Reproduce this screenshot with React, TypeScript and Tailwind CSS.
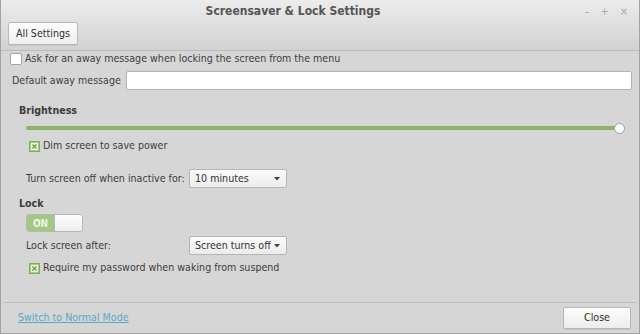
import React from 'react';

const Check = ({ checked }: { checked?: boolean }) =>
  checked ? (
    <span className="w-[11px] h-[11px] border border-[#7fae5a] bg-[#a5cc82] flex items-center justify-center shrink-0">
      <svg width="7" height="7" viewBox="0 0 7 7">
        <rect x="0" y="0" width="7" height="7" fill="#e9f3df" />
        <path d="M1.5 1.5 L5.5 5.5 M5.5 1.5 L1.5 5.5" stroke="#6c9e47" strokeWidth="1.3" />
      </svg>
    </span>
  ) : (
    <span className="w-[12px] h-[12px] border border-[#a3a3a3] bg-white rounded-[2px] shrink-0" />
  );

const Combo = ({ label }: { label: string }) => (
  <div className="w-[98px] h-[19px] bg-gradient-to-b from-[#fbfbfb] to-[#ececec] border border-[#b5b5b5] rounded-[2px] flex items-center justify-between pl-[5px] pr-[6px] text-[#333] whitespace-nowrap">
    <span>{label}</span>
    <svg width="6" height="4" viewBox="0 0 6 4" className="shrink-0">
      <path d="M0 0 L6 0 L3 3.5 Z" fill="#444" />
    </svg>
  </div>
);

const App = () => {
  return (
    <div
      className="w-[640px] h-[334px] bg-[#d6d6d6] border-x border-b border-[#a2a2a2] flex flex-col text-[10.6px] text-[#3c3c3c] overflow-hidden"
      style={{ fontFamily: '"DejaVu Sans Condensed", "DejaVu Sans", sans-serif', fontStretch: 'condensed' }}
    >
      {/* Header */}
      <div className="h-[51px] bg-gradient-to-b from-[#ececec] to-[#d2d2d2] border-b border-[#bcbcbc] flex flex-col shrink-0">
        <div className="h-[21px] flex items-center relative pr-[54px]">
          <span className="mx-auto font-bold text-[12px] text-[#555] pt-[1px]">Screensaver &amp; Lock Settings</span>
          <div className="absolute right-[11px] top-[4px] flex gap-[11px] text-[#a8a8a8] text-[11px]">
            <span>–</span>
            <span>+</span>
            <span>×</span>
          </div>
        </div>
        <div className="pl-[7px] pt-[1px]">
          <button className="h-[23px] px-[7px] bg-gradient-to-b from-[#fdfdfd] to-[#eeeeee] border border-[#b9b9b9] rounded-[2px] text-[#2e2e2e] shadow-[0_1px_0_rgba(0,0,0,0.08)]">
            All Settings
          </button>
        </div>
      </div>

      {/* Content */}
      <div className="flex-1 flex flex-col">
        <div className="h-[14px] mt-[1px] flex items-center gap-[3px] pl-[9px]">
          <Check />
          <span>Ask for an away message when locking the screen from the menu</span>
        </div>
        <div className="h-[19px] mt-[5px] flex items-center gap-[5px] pl-[11px] pr-[7px]">
          <span>Default away message</span>
          <div className="flex-1 h-[19px] bg-white border border-[#b3b3b3] rounded-[2px]" />
        </div>
        <div className="h-[12px] mt-[15px] pl-[18px] flex items-center font-bold">Brightness</div>
        <div className="h-[12px] mt-[5px] pl-[25px] pr-[14px] flex items-center">
          <div className="flex-1 h-[4px] bg-[#8cb46a] rounded-full" />
          <div className="w-[11px] h-[11px] -ml-[5px] rounded-full bg-white border border-[#9c9c9c]" />
        </div>
        <div className="h-[12px] mt-[6px] pl-[28px] flex items-center gap-[3px]">
          <Check checked />
          <span>Dim screen to save power</span>
        </div>
        <div className="h-[19px] mt-[17px] pl-[25px] flex items-center">
          <span className="w-[163px] whitespace-nowrap">Turn screen off when inactive for:</span>
          <Combo label="10 minutes" />
        </div>
        <div className="h-[12px] mt-[10px] pl-[18px] flex items-center font-bold">Lock</div>
        <div className="mt-[4px] pl-[25px]">
          <div className="w-[57px] h-[18px] border border-[#b7b7b7] rounded-[3px] flex overflow-hidden">
            <div className="w-[27px] bg-[#a2c983] text-[#eef7e6] font-bold flex items-center justify-center text-[10px]">ON</div>
            <div className="flex-1 bg-gradient-to-b from-[#fefefe] to-[#ededed] border-l border-[#b7b7b7]" />
          </div>
        </div>
        <div className="h-[19px] mt-[4px] pl-[25px] flex items-center">
          <span className="w-[163px] whitespace-nowrap">Lock screen after:</span>
          <Combo label="Screen turns off" />
        </div>
        <div className="h-[12px] mt-[7px] pl-[28px] flex items-center gap-[3px]">
          <Check checked />
          <span>Require my password when waking from suspend</span>
        </div>
      </div>

      {/* Footer */}
      <div className="h-[31px] mx-[3px] border-t border-[#bababa] flex items-center justify-between pl-[14px] pr-[5px] shrink-0">
        <span className="text-[#55a9c4] underline">Switch to Normal Mode</span>
        <button className="w-[68px] h-[22px] bg-gradient-to-b from-[#fdfdfd] to-[#ececec] border border-[#b7b7b7] rounded-[2px] text-[#2e2e2e] shadow-[0_1px_0_rgba(0,0,0,0.08)]">
          Close
        </button>
      </div>
    </div>
  );
};

export default App;
